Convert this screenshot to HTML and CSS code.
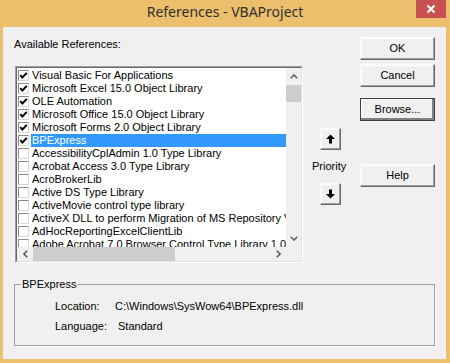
FILE: index.html
```html
<!DOCTYPE html>
<html>
<head>
<meta charset="utf-8">
<link rel="stylesheet" href="styles.css">
</head>
<body>
<div class="window">
  <div class="titlebar">
    <span></span>
    <div class="title">References - VBAProject</div>
    <div class="close"><svg width="10" height="10" viewBox="0 0 10 10"><path d="M1.5 1.5 L8.5 8.5 M8.5 1.5 L1.5 8.5" stroke="#fff" stroke-width="2" fill="none"/></svg></div>
  </div>
  <div class="client">
    <div class="main">
      <div class="left">
        <div class="label">Available References:</div>
        <div class="listbox">
          <div class="listbox-inner">
            <div class="items">
              <div class="row"><span class="cb"><svg width="9" height="9" viewBox="0 0 9 9"><path d="M1.2 4.2 L3.4 6.5 L7.8 1.8" stroke="#000" stroke-width="1.9" fill="none"/></svg></span><span class="txt">Visual Basic For Applications</span></div>
              <div class="row"><span class="cb"><svg width="9" height="9" viewBox="0 0 9 9"><path d="M1.2 4.2 L3.4 6.5 L7.8 1.8" stroke="#000" stroke-width="1.9" fill="none"/></svg></span><span class="txt">Microsoft Excel 15.0 Object Library</span></div>
              <div class="row"><span class="cb"><svg width="9" height="9" viewBox="0 0 9 9"><path d="M1.2 4.2 L3.4 6.5 L7.8 1.8" stroke="#000" stroke-width="1.9" fill="none"/></svg></span><span class="txt">OLE Automation</span></div>
              <div class="row"><span class="cb"><svg width="9" height="9" viewBox="0 0 9 9"><path d="M1.2 4.2 L3.4 6.5 L7.8 1.8" stroke="#000" stroke-width="1.9" fill="none"/></svg></span><span class="txt">Microsoft Office 15.0 Object Library</span></div>
              <div class="row"><span class="cb"><svg width="9" height="9" viewBox="0 0 9 9"><path d="M1.2 4.2 L3.4 6.5 L7.8 1.8" stroke="#000" stroke-width="1.9" fill="none"/></svg></span><span class="txt">Microsoft Forms 2.0 Object Library</span></div>
              <div class="row"><span class="cb"><svg width="9" height="9" viewBox="0 0 9 9"><path d="M1.2 4.2 L3.4 6.5 L7.8 1.8" stroke="#000" stroke-width="1.9" fill="none"/></svg></span><span class="txt selected">BPExpress</span></div>
              <div class="row"><span class="cb"></span><span class="txt">AccessibilityCplAdmin 1.0 Type Library</span></div>
              <div class="row"><span class="cb"></span><span class="txt">Acrobat Access 3.0 Type Library</span></div>
              <div class="row"><span class="cb"></span><span class="txt">AcroBrokerLib</span></div>
              <div class="row"><span class="cb"></span><span class="txt">Active DS Type Library</span></div>
              <div class="row"><span class="cb"></span><span class="txt">ActiveMovie control type library</span></div>
              <div class="row"><span class="cb"></span><span class="txt">ActiveX DLL to perform Migration of MS Repository V1</span></div>
              <div class="row"><span class="cb"></span><span class="txt">AdHocReportingExcelClientLib</span></div>
              <div class="row"><span class="cb"></span><span class="txt">Adobe Acrobat 7.0 Browser Control Type Library 1.0</span></div>
            </div>
            <div class="vscroll">
              <div class="arrow"><svg width="8" height="5" viewBox="0 0 8 5"><path d="M0.7 4.3 L4 1 L7.3 4.3" stroke="#606060" stroke-width="1.6" fill="none"/></svg></div>
              <div class="vthumb"></div>
              <div class="vtrack"></div>
              <div class="arrow"><svg width="8" height="5" viewBox="0 0 8 5"><path d="M0.7 0.7 L4 4 L7.3 0.7" stroke="#606060" stroke-width="1.6" fill="none"/></svg></div>
            </div>
            <div class="hscroll">
              <div class="harrow"><svg width="5" height="8" viewBox="0 0 5 8"><path d="M4.3 0.7 L1 4 L4.3 7.3" stroke="#606060" stroke-width="1.6" fill="none"/></svg></div>
              <div class="hthumb"></div>
              <div class="htrack"></div>
              <div class="harrow"><svg width="5" height="8" viewBox="0 0 5 8"><path d="M0.7 0.7 L4 4 L0.7 7.3" stroke="#606060" stroke-width="1.6" fill="none"/></svg></div>
            </div>
            <div class="corner"></div>
          </div>
        </div>
      </div>
      <div class="priority">
        <div class="btn arrowbtn up"><svg width="9" height="10" viewBox="0 0 9 10"><path d="M4.5 0.5 L9 5 L6 5 L6 9.5 L3 9.5 L3 5 L0 5 Z" fill="#000"/></svg></div>
        <div class="prio-label">Priority</div>
        <div class="btn arrowbtn"><svg width="9" height="10" viewBox="0 0 9 10"><path d="M4.5 9.5 L9 5 L6 5 L6 0.5 L3 0.5 L3 5 L0 5 Z" fill="#000"/></svg></div>
      </div>
      <div class="buttons">
        <div class="btn">OK</div>
        <div class="btn gap-small">Cancel</div>
        <div class="btn default gap-mid">Browse...</div>
        <div class="btn gap-large">Help</div>
      </div>
    </div>
    <fieldset class="group">
      <legend>BPExpress</legend>
      <div class="info">
        <span class="key">Location:</span><span class="val">C:\Windows\SysWow64\BPExpress.dll</span>
        <span class="key">Language:</span><span class="val lang">Standard</span>
      </div>
    </fieldset>
  </div>
</div>
</body>
</html>
```

FILE: styles.css
```css
* { box-sizing: border-box; }
html, body { margin: 0; padding: 0; background: #ebbf6b; }
body {
  font-family: "Liberation Sans", Arial, sans-serif;
  font-size: 11px;
  color: #000;
}
.window {
  width: 450px;
  height: 363px;
  background: #ebbf6b;
  display: flex;
  flex-direction: column;
}
.titlebar {
  height: 27px;
  display: grid;
  grid-template-columns: 1fr auto 1fr;
}
.title {
  font-family: "Noto Sans", "Open Sans", sans-serif;
  font-size: 14px;
  line-height: 24px;
  color: #303030;
  white-space: nowrap;
}
.close {
  justify-self: end;
  width: 30px;
  height: 18px;
  margin-right: 4px;
  background: #c75050;
  display: flex;
  align-items: center;
  justify-content: center;
}
.client {
  flex: 1;
  margin: 0 4px 4px 3px;
  background: #f0f0f0;
  padding: 10px 11px 0 11px;
}
.main {
  display: grid;
  grid-template-columns: 289px 57px 75px;
  height: 241px;
}
.label {
  line-height: 13px;
  margin-top: 1px;
}
.listbox {
  margin-top: 15px;
  margin-left: 1px;
  width: 288px;
  height: 197px;
  border: 1px solid;
  border-color: #a0a0a0 #ffffff #ffffff #a0a0a0;
}
.listbox-inner {
  width: 100%;
  height: 100%;
  border: 1px solid;
  border-color: #696969 #e3e3e3 #e3e3e3 #696969;
  display: grid;
  grid-template-columns: 269px 15px;
  grid-template-rows: 179px 14px;
  background: #fff;
}
.items {
  overflow: hidden;
  padding-top: 1px;
  background: #fff;
}
.row {
  display: flex;
  height: 13px;
  line-height: 13px;
  white-space: nowrap;
}
.cb {
  flex: none;
  width: 11px;
  height: 11px;
  margin: 1px 1px 0 1px;
  border: 1px solid;
  border-color: #8a8a8a #d8d8d8 #d8d8d8 #8a8a8a;
  background: #fff;
  display: flex;
  align-items: center;
  justify-content: center;
}
.txt {
  flex: 1;
  padding-left: 1px;
  margin-left: 1px;
  overflow: hidden;
}
.txt.selected {
  background: #3399ff;
  color: #fff;
}
.vscroll {
  background: #f0f0f0;
  display: flex;
  flex-direction: column;
}
.arrow {
  height: 17px;
  display: flex;
  align-items: center;
  justify-content: center;
}
.vthumb {
  height: 17px;
  background: #cdcdcd;
}
.vtrack { flex: 1; }
.hscroll {
  background: #f0f0f0;
  display: flex;
}
.harrow {
  width: 16px;
  display: flex;
  align-items: center;
  justify-content: center;
}
.hthumb {
  width: 142px;
  background: #cdcdcd;
}
.htrack { flex: 1; }
.corner { background: #f0f0f0; }

.priority {
  display: flex;
  flex-direction: column;
  align-items: flex-start;
}
.btn {
  width: 75px;
  height: 23px;
  background: #f0f0f0;
  border: 1px solid;
  border-color: #f8f8f8 #696969 #696969 #f8f8f8;
  box-shadow: inset -1px -1px 0 #a0a0a0, inset 1px 1px 0 #ffffff;
  display: flex;
  align-items: center;
  justify-content: center;
  line-height: 13px;
}
.btn.default {
  border-color: #404040;
  box-shadow: inset -2px -2px 0 #808080, inset 1px 1px 0 #ffffff;
}
.arrowbtn {
  width: 21px;
  height: 22px;
  margin-left: 17px;
}
.arrowbtn.up { margin-top: 91px; }
.prio-label {
  margin: 10px 0 10px 9px;
  line-height: 13px;
}
.buttons {
  display: flex;
  flex-direction: column;
}
.gap-small { margin-top: 4px; }
.gap-mid { margin-top: 11px; }
.gap-large { margin-top: 43px; }

.group {
  margin: 0;
  padding: 9px 0 11px 0;
  height: 68px;
  border: 1px solid #a0a0a0;
  box-shadow: 1px 1px 0 #ffffff;
}
.group legend {
  margin-left: 6px;
  padding: 0 1px;
  line-height: 13px;
}
.info {
  display: grid;
  grid-template-columns: 60px auto;
  row-gap: 7px;
  padding-left: 40px;
  line-height: 13px;
}
.val.lang { padding-left: 3px; }
```
